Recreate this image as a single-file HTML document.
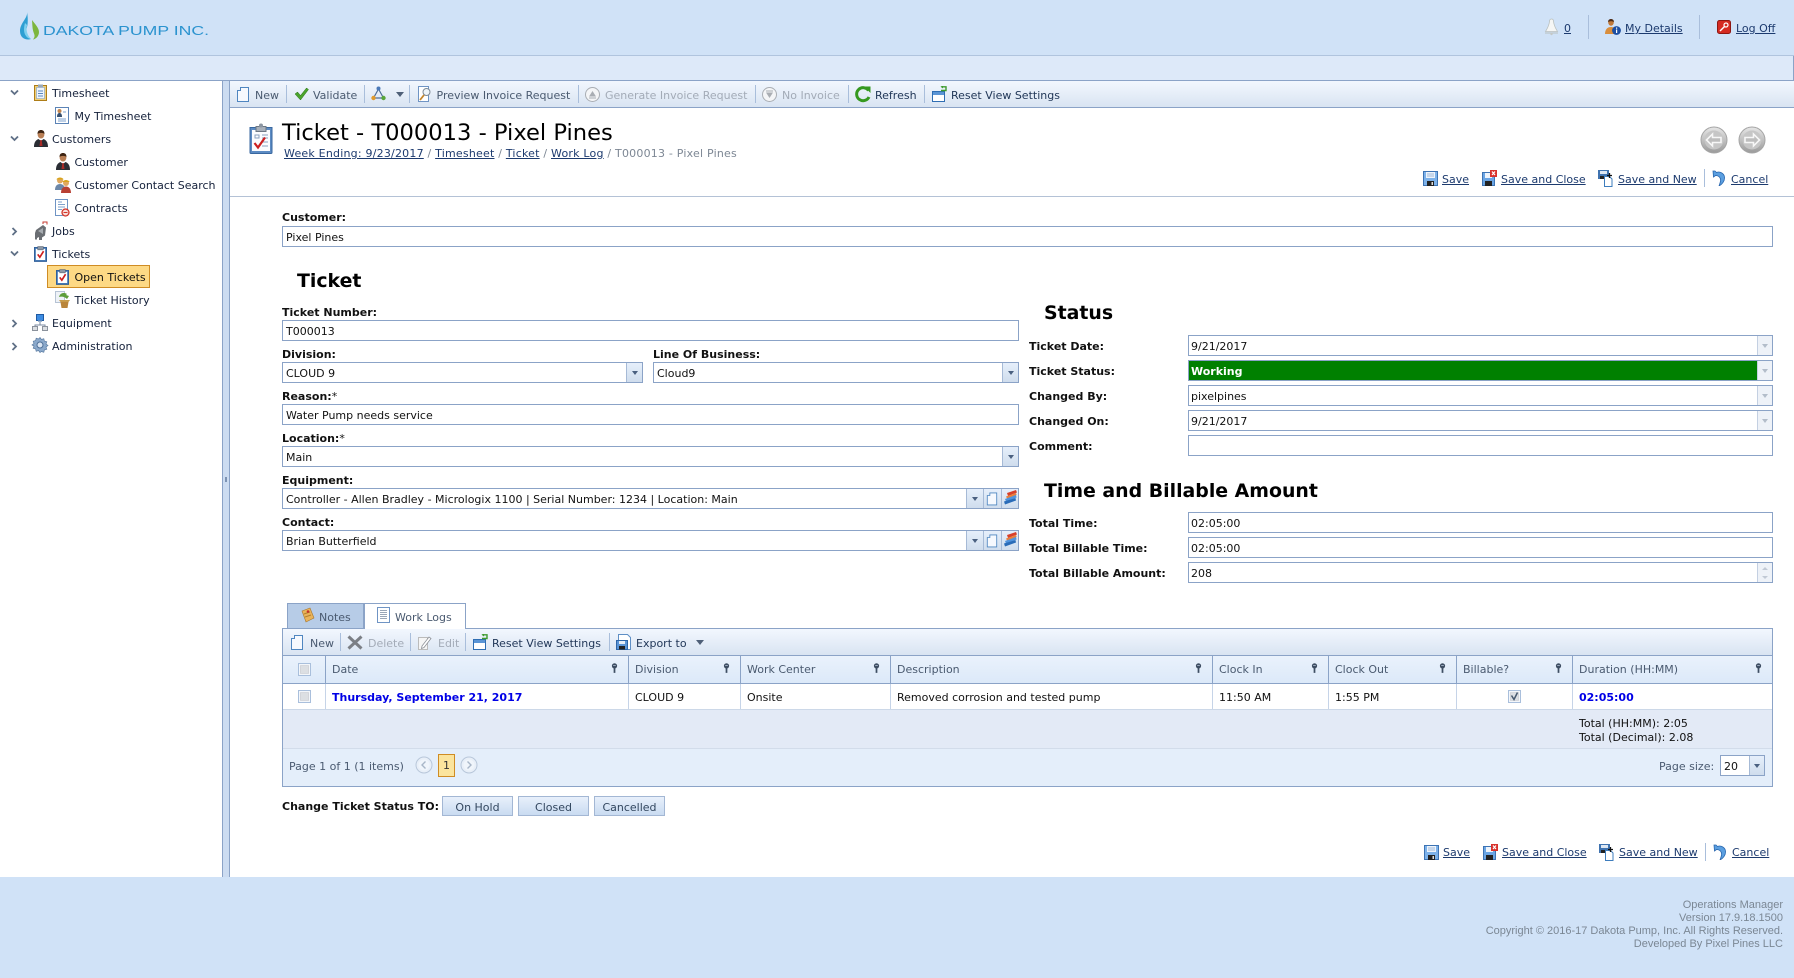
<!DOCTYPE html>
<html><head><meta charset="utf-8"><title>Ticket</title>
<style>
html,body{margin:0;padding:0;width:1794px;height:978px;overflow:hidden;background:#fff}
body{position:relative;font:11px/16px "DejaVu Sans",Verdana,sans-serif;color:#14203a}
.t{position:absolute;white-space:nowrap;height:16px;line-height:16px;margin-top:1px}
.h{margin-top:0;font-size:18.9px;font-weight:700;height:24px;line-height:24px;color:#000}
.b{position:absolute}
.l{position:absolute;white-space:nowrap;height:16px;line-height:16px;font-weight:700;color:#111;margin-top:1px}
.a{color:#1c3a6e;text-decoration:underline}
.d{color:#a3abb7}
.g{color:#4a5a70}
.i{position:absolute;box-sizing:border-box;border:1px solid #8ba3c7;background:#fff;overflow:hidden}
.i span{position:absolute;left:3px;top:3px;line-height:16px;white-space:nowrap;color:#111}
.i.r span{left:2px}
.dd{position:absolute;box-sizing:border-box;background:linear-gradient(#e6effb,#cfdded);border-left:1px solid #a6bad6;top:0;bottom:0}
.dd:after{content:"";position:absolute;left:50%;top:50%;margin:-2px 0 0 -3px;border:3px solid transparent;border-top:4px solid #4a6080;border-bottom:0}
.ro{background:#eef2f8;border-left:1px solid #c4d0e2}
.ro:after{border-top-color:#b3bdca}
.sep{position:absolute;width:1px;background:#a9bedb}
.btn{position:absolute;box-sizing:border-box;height:20px;top:796px;border:1px solid #a3b7d4;background:linear-gradient(#e8f0fb,#c9dbf1);text-align:center;line-height:21px;color:#33475f}
svg{position:absolute;overflow:visible}
.v{position:absolute;width:1px;background:#c6d4e8}
.vh{position:absolute;width:1px;background:#8ba3c7;top:656px;height:27px}
</style></head><body>
<svg width="0" height="0" style="position:absolute"><defs>
<linearGradient id="cg" x1="0" y1="0" x2="0" y2="1"><stop offset="0" stop-color="#e6e6e6"/><stop offset="1" stop-color="#9a9a9a"/></linearGradient>
<symbol id="new" viewBox="0 0 14 16"><path d="M1.500 4.500h3v-3h8v14h-11z" fill="#f6f9fe" stroke="#4f86c0"/></symbol>
<symbol id="save" viewBox="0 0 15 15"><path d="M.5 .5h14v14H.5z" fill="#7db2ea" stroke="#3d73b3"/><path d="M3 1h9v6H3z" fill="#eef4fb"/><path d="M4 3h7M4 5h7" stroke="#9db8d8"/><path d="M4 10h7v5H4z" fill="#222"/><path d="M8.500 11h1.500v3H8.500z" fill="#ddd"/></symbol>
<symbol id="saveclose" viewBox="0 0 15 16"><path d="M.5 2.500h12v13H.5z" fill="#6aa5e4" stroke="#3d73b3"/><path d="M3 3h7v5H3z" fill="#eef4fb"/><path d="M3 11h7v5H3z" fill="#222"/><path d="M8 0h7v7H8z" fill="#d8322c"/><path d="M10 1.500l3 3.500m0-3.500l-3 3.500" stroke="#fff" stroke-width="1.200"/></symbol>
<symbol id="savenew" viewBox="0 0 15 17"><path d="M0 0h11v9H0z" fill="#3f73b0"/><path d="M2 1h7v3H2z" fill="#dde7f3"/><path d="M2 6h7v3H2z" fill="#222"/><path d="M6.500 6.500h5l2.500 2.500v7.500H6.500z" fill="#fff" stroke="#3e7dbd"/><path d="M11.500 3v5M9 5.500h5" stroke="#111" stroke-width="1.300"/></symbol>
<symbol id="cancel" viewBox="0 0 14 16"><path d="M1 1l.5 6 2-1.500C7 5.500 9 8 8.500 11 8.200 13 7.500 14.500 7 16c3-1.500 6-5 5.500-9C12 3.500 8 1 4.500 2.500L3 1z" fill="#5b9fe0" stroke="#2a67ae" stroke-width=".8"/></symbol>
<symbol id="clip" viewBox="0 0 14 18"><path d="M.5 2.500h13v15H.5z" fill="#4a7db8" stroke="#2f5f99"/><path d="M2 4h10v12H2z" fill="#fff"/><path d="M4 1.500h6v3.500H4z" fill="#8d98a6" stroke="#5d6877" stroke-width=".6"/><path d="M4 10l2.300 3 4-6.500" fill="none" stroke="#cc1f1f" stroke-width="1.800"/></symbol>
<symbol id="person" viewBox="0 0 16 18"><ellipse cx="8" cy="4.500" rx="3.400" ry="4" fill="#b97f55"/><path d="M4.500 4C4.500 1 6 0 8 0s3.500 1 3.500 4C10 2.500 6 2.500 4.500 4z" fill="#3e2412"/><path d="M1 17c0-5 2-7 4.500-8L8 11l2.500-2c2.500 1 4.500 3 4.500 8z" fill="#2a2d34"/><path d="M7.300 10h1.400l.8 6H6.500z" fill="#a82a26"/></symbol>
<symbol id="filter" viewBox="0 0 8 12"><circle cx="4" cy="3" r="3" fill="#3e4e63"/><path d="M3 5h2v6H3z" fill="#3e4e63"/><path d="M2.500 2h3v1h-3z" fill="#a9b8cc"/></symbol>
<symbol id="reset" viewBox="0 0 16 16"><path d="M.5 5.500h12v10H.5z" fill="#fff" stroke="#2f6eb3"/><path d="M1 6h11v3H1z" fill="#5b95d6"/><path d="M9 4.500H14V.8H9.500" fill="none" stroke="#3e9b2e" stroke-width="1.400"/><path d="M11 -.8L8.500 .8 11 2.500z" fill="#3e9b2e"/></symbol>
<symbol id="cb" viewBox="0 0 13 13"><path d="M.5 .5h12v12H.5z" fill="#f3f6fa" stroke="#a9bfdc"/><path d="M2.500 2.500h8v8h-8z" fill="#dcdfe3" stroke="#c3c6cb" stroke-width=".6"/></symbol>
<symbol id="stack" viewBox="0 0 14 15"><path d="M4 3L13 0l1 2.500-9 3.500z" fill="#d8402a"/><path d="M3 6.500L13 3l.6 2L4 8.500z" fill="#e87f3c"/><path d="M2 9l11-4 .6 2.500L3 11.500z" fill="#4f93dd"/><path d="M1 11.500L12.500 8l.5 2.500L2 14.500z" fill="#2a6cb8"/></symbol>
</defs></svg>

<!-- header -->
<div class="b" style="left:0;top:0;width:1794px;height:55px;background:#d0e2f7;border-bottom:1px solid #b0c4de;box-sizing:content-box"></div>
<div class="b" style="left:0;top:56px;width:1793px;height:24px;background:#dde9f9;border-right:1px solid #8ba3c7"></div>
<div class="b" style="left:0;top:80px;width:1794px;height:1px;background:#8ba3c7"></div>

<!-- logo -->
<svg style="left:19px;top:12px" width="22" height="28" viewBox="0 0 22 28"><path d="M8 0C9 6 1 11 1 19c0 6 4 8.500 8 8.500 1.500 0 3-.5 3-.5-4-2-6-6-4-12 1-3 1-10 0-15z" fill="#2e9fd3"/><path d="M6 11c-1 4-2 9 1 13 1 1.500 3 2.800 5 3-3-3-5.500-8-4-14z" fill="#7fd0ee"/><path d="M13 8c3 4 7 8 7 12 0 4-3 7-6 7.500 3-3.500 1-5 0-9-.7-3-.7-7-1-10.500z" fill="#7cb63e"/></svg>
<svg style="left:43px;top:23px" width="168" height="14"><text x="0" y="12" textLength="166" lengthAdjust="spacingAndGlyphs" font-family="Liberation Sans" font-size="12.500" fill="#2b93cf">DAKOTA PUMP INC.</text></svg>

<!-- top right -->
<svg style="left:1544px;top:18px" width="15" height="17" viewBox="0 0 15 17"><path d="M7.500 1c1.500 0 2 1 2 2.500C10 8 12 11 13.500 13.500H1.500C3 11 5 8 5.500 3.500 5.500 2 6 1 7.500 1z" fill="#f5f6f5" stroke="#b9c0bf" stroke-width=".8"/><path d="M1 14.500h13v1H1z" fill="#b9c0bf"/><circle cx="7.500" cy="16" r="1.200" fill="#c4c8c6"/></svg>
<span class="t a" style="left:1564px;top:20px">0</span>
<div class="sep" style="left:1588px;top:15px;height:24px"></div>
<svg style="left:1605px;top:19px" width="16" height="16" viewBox="0 0 16 16"><ellipse cx="6" cy="3.500" rx="2.800" ry="3.200" fill="#c0793a"/><path d="M3 3C3 1 4.500 0 6 0s3 1 3 3c-1.500-1-4.500-1-6 0z" fill="#4e2c16"/><path d="M0 15c0-4 2-7 6-7s5 3 5 7z" fill="#d98e3c"/><circle cx="11.500" cy="11.500" r="4.400" fill="#1c4fa3"/><path d="M11 10.500h1.200v3.500H11zM11 8.500h1.200v1.200H11z" fill="#fff"/></svg>
<span class="t a" style="left:1625px;top:20px">My Details</span>
<div class="sep" style="left:1699px;top:15px;height:24px"></div>
<svg style="left:1717px;top:20px" width="14" height="14" viewBox="0 0 14 14"><rect x=".5" y=".5" width="13" height="13" rx="2" fill="#d52b22" stroke="#8e1712"/><circle cx="9" cy="5" r="2" fill="none" stroke="#fff" stroke-width="1.200"/><path d="M7.500 6.500L3 11" stroke="#fff" stroke-width="1.400"/></svg>
<span class="t a" style="left:1736px;top:20px">Log Off</span>

<!-- sidebar -->
<div class="b" style="left:222px;top:81px;width:1px;height:796px;background:#8ba3c7"></div>
<div class="b" style="left:223px;top:81px;width:6px;height:796px;background:#ccdcf1"></div>
<div class="b" style="left:229px;top:81px;width:1px;height:796px;background:#8ba3c7"></div>
<div class="b" style="left:225px;top:477px;width:2px;height:5px;background:#7d93b3"></div>

<svg style="left:0;top:81px" width="222" height="290" fill="none" stroke="#5f6f86" stroke-width="1.800">
<path d="M11 9.500l3.500 3.500 3.500-3.500M11 55.500l3.500 3.500 3.500-3.500M11 170.500l3.500 3.500 3.500-3.500"/>
<path d="M12.500 147l3.500 3.500-3.500 3.500M12.500 239l3.500 3.500-3.500 3.500M12.500 262l3.500 3.500-3.500 3.500"/></svg>

<svg style="left:34px;top:84px" width="13" height="17" viewBox="0 0 13 17"><path d="M.5 1.500h12v15H.5z" fill="#f2cf74" stroke="#ae7d18"/><path d="M2.500 3.500h8v11h-8z" fill="#eef4fc" stroke="#7ba0cc" stroke-width=".6"/><path d="M4 7h5M4 9.500h5M4 12h5" stroke="#5b89bf"/><path d="M4 .5h5v3H4z" fill="#9aa8b8"/></svg>
<span class="t" style="left:52px;top:85px">Timesheet</span>
<svg style="left:55px;top:107px" width="14" height="17" viewBox="0 0 14 17"><path d="M.5 .5h13v16H.5z" fill="#fff" stroke="#5b83b6"/><circle cx="4.500" cy="4" r="2" fill="#c1854f"/><path d="M2 10c0-3 1-4 2.500-4S7 7 7 10z" fill="#37506f"/><path d="M3 12h8M3 14h8M8 5h3" stroke="#7ea2cc"/></svg>
<span class="t" style="left:74.500px;top:108px">My Timesheet</span>

<svg style="left:33px;top:130px" width="16" height="18"><use href="#person" width="16" height="18"/></svg>
<span class="t" style="left:52px;top:131px">Customers</span>
<svg style="left:55px;top:153px" width="16" height="18"><use href="#person" width="16" height="18"/></svg>
<span class="t" style="left:74.500px;top:154px">Customer</span>
<svg style="left:54px;top:176px" width="18" height="17" viewBox="0 0 18 17"><circle cx="6" cy="4.500" r="3" fill="#e0a860"/><path d="M2.500 3.500C3 1 9 1 9.500 3.500z" fill="#d9a41d"/><path d="M1 14c0-4 2-6 5-6s5 2 5 6z" fill="#6d87a8"/><circle cx="12" cy="7" r="3" fill="#e0a860"/><path d="M8.500 6C9 3.500 15 3.500 15.500 6z" fill="#d9a41d"/><path d="M7 17c0-4 2-6.500 5-6.500s5 2.500 5 6.500z" fill="#b84033"/></svg>
<span class="t" style="left:74.500px;top:177px">Customer Contact Search</span>
<svg style="left:55px;top:199px" width="15" height="18" viewBox="0 0 15 18"><path d="M.5 .5h12v16H.5z" fill="#fff" stroke="#6f94c4"/><path d="M3 3h4M3 5.500h7M3 8h7M3 10.500h4" stroke="#7ea2cc"/><circle cx="10.500" cy="13.500" r="3.500" fill="#f7dcd8" stroke="#d3352a" stroke-width="1.300"/><path d="M8.500 13.500h4" stroke="#d3352a"/></svg>
<span class="t" style="left:74.500px;top:200px">Contracts</span>

<svg style="left:33px;top:222px" width="15" height="18" viewBox="0 0 15 18"><path d="M3 8l7-5 3 2.500-1 8-3 2v2.500H6V15l-2 1v1.500H2V11z" fill="#6a6e73"/><path d="M10 2V0h4v2.500" fill="none" stroke="#c63b30"/><path d="M5 9l5-3v6z" fill="#a6abb0"/></svg>
<span class="t" style="left:52px;top:223px">Jobs</span>
<svg style="left:34px;top:245px" width="13" height="17"><use href="#clip" width="13" height="17"/></svg>
<span class="t" style="left:52px;top:246px">Tickets</span>

<div class="b" style="left:47px;top:265px;width:103px;height:23px;box-sizing:border-box;background:#fdd985;border:1px solid #cf8c24"></div>
<svg style="left:56px;top:268px" width="13" height="17"><use href="#clip" width="13" height="17"/></svg>
<span class="t" style="left:74.500px;top:269px;color:#111">Open Tickets</span>
<svg style="left:55px;top:291px" width="16" height="18" viewBox="0 0 16 18"><path d="M.5 .5h9v11h-9z" fill="#eef2f7" stroke="#b6c3d4"/><path d="M4 6c1-4 5-5 8-3l-1 1 3 1-2 3c-2-2-5-3-8-2z" fill="#5e9e3a"/><path d="M4 9h11l-1.500 2H5.500z" fill="#c69b4b"/><path d="M5.500 11h8l-1 6h-6z" fill="#b9853b"/></svg>
<span class="t" style="left:74.500px;top:292px">Ticket History</span>

<svg style="left:32px;top:314px" width="16" height="17" viewBox="0 0 16 17"><path d="M4.500 .5h7v6h-7z" fill="#3d8ce2" stroke="#1f5aa3"/><path d="M6 6.500h4v1.500H6z" fill="#9bb2cc"/><path d="M8 8v3M3 13v-2h10v2" fill="none" stroke="#7a8aa0"/><path d="M.5 12.500h5v4h-5zM10.500 12.500h5v4h-5z" fill="#dcdfe3" stroke="#8b929c"/></svg>
<span class="t" style="left:52px;top:315px">Equipment</span>
<svg style="left:32px;top:337px" width="16" height="16" viewBox="0 0 16 16"><path d="M8 .5l1.500 2 2.300-.8.6 2.400 2.400.6-.8 2.300 2 1.500-2 1.500.8 2.300-2.400.6-.6 2.400-2.300-.8L8 15.500l-1.500-2-2.300.8-.6-2.400-2.400-.6.8-2.300L0 8l2-1.500-.8-2.300 2.400-.6.6-2.400 2.300.8z" fill="#8ba9cb" stroke="#5a7ba1" stroke-width=".7"/><circle cx="8" cy="8" r="3" fill="#dbe6f3" stroke="#4f7098"/></svg>
<span class="t" style="left:52px;top:338px">Administration</span>

<!-- main toolbar -->
<div class="b" style="left:230px;top:81px;width:1564px;height:26px;background:linear-gradient(#f2f7fe,#d9e4f2);border-bottom:1px solid #8ba3c7"></div>
<svg style="left:236px;top:86px" width="14" height="16"><use href="#new" width="14" height="16"/></svg>
<span class="t g" style="left:255px;top:87px">New</span>
<div class="sep" style="left:286px;top:85px;height:18px"></div>
<svg style="left:294px;top:87px" width="15" height="14" viewBox="0 0 15 14"><path d="M1 7l2.500-2 3 3.500L12.500 1 14.500 2.500 6.500 13z" fill="#4aa32c" stroke="#2c7516" stroke-width=".5"/></svg>
<span class="t g" style="left:313px;top:87px">Validate</span>
<div class="sep" style="left:364px;top:85px;height:18px"></div>
<svg style="left:371px;top:86px" width="15" height="15" viewBox="0 0 15 15"><path d="M7.500 3L2.500 12h10z" fill="none" stroke="#4f6d96" stroke-width="1.200"/><circle cx="7.500" cy="2.500" r="2" fill="#4b79b8"/><circle cx="2.500" cy="12" r="2.200" fill="#e19a2c"/><circle cx="12.500" cy="12" r="2.200" fill="#59a63a"/></svg>
<div class="b" style="left:396px;top:92px;border:4px solid transparent;border-top:5px solid #4f6078;border-bottom:0"></div>
<div class="sep" style="left:409px;top:85px;height:18px"></div>
<svg style="left:418px;top:86px" width="14" height="16" viewBox="0 0 14 16"><path d="M.5 .5h10v15h-10z" fill="#fff" stroke="#6f94c4"/><circle cx="8.500" cy="6" r="3.500" fill="#eef5fb" stroke="#7f8a96"/><path d="M6 9l-4 5" stroke="#c5862b" stroke-width="1.800"/></svg>
<span class="t g" style="left:436.500px;top:87px">Preview Invoice Request</span>
<div class="sep" style="left:578px;top:85px;height:18px"></div>
<svg style="left:585px;top:87px" width="15" height="15" viewBox="0 0 15 15"><circle cx="7.500" cy="7.500" r="7" fill="#f4f5f7" stroke="#a9adb3"/><path d="M7.500 4l3.500 5.500H4z" fill="#a9adb3"/><path d="M4 11h7" stroke="#a9adb3"/></svg>
<span class="t d" style="left:605px;top:87px">Generate Invoice Request</span>
<div class="sep" style="left:755px;top:85px;height:18px"></div>
<svg style="left:762px;top:87px" width="15" height="15" viewBox="0 0 15 15"><circle cx="7.500" cy="7.500" r="7" fill="#f4f5f7" stroke="#a9adb3"/><path d="M7.500 11L4 5.500h7z" fill="#a9adb3"/><path d="M4 4h7" stroke="#a9adb3"/></svg>
<span class="t d" style="left:782px;top:87px">No Invoice</span>
<div class="sep" style="left:848px;top:85px;height:18px"></div>
<svg style="left:855px;top:86px" width="16" height="16" viewBox="0 0 16 16"><path d="M13.500 4.500A6.500 6.500 0 1 0 14 11" fill="none" stroke="#35991f" stroke-width="3"/><path d="M9 .5h6.500V7z" fill="#35991f"/></svg>
<span class="t" style="left:875px;top:87px;color:#1f3556">Refresh</span>
<div class="sep" style="left:924px;top:85px;height:18px"></div>
<svg style="left:932px;top:86px" width="16" height="16"><use href="#reset" width="16" height="16"/></svg>
<span class="t" style="left:951px;top:87px;color:#1f3556">Reset View Settings</span>

<!-- title -->
<svg style="left:249px;top:123px" width="24" height="31" viewBox="0 0 24 31"><path d="M1 4.500h22v25a1 1 0 0 1-1 1H2a1 1 0 0 1-1-1z" fill="#5c8bc3" stroke="#38679f"/><path d="M3 7h18v21H3z" fill="#fbfcfe"/><path d="M7 3.500h10v5H7z" fill="#a8b0ba" stroke="#6d7783"/><circle cx="12" cy="2.500" r="2" fill="#8b95a1"/><path d="M6 12h4v3H6zM13 12h6M13 15h6M13 19h6M13 23h6" fill="none" stroke="#8aa0bd"/><path d="M5.500 20l3.500 4.500 7-10" fill="none" stroke="#cc1f1f" stroke-width="2.200"/></svg>
<span class="t" style="left:282px;top:119px;font-size:22.600px;height:26px;line-height:26px;color:#000">Ticket - T000013 - Pixel Pines</span>
<span class="t" style="left:284px;top:145px;color:#7d8794;letter-spacing:.21px"><span class="a">Week Ending: 9/23/2017</span> / <span class="a">Timesheet</span> / <span class="a">Ticket</span> / <span class="a">Work Log</span> / T000013 - Pixel Pines</span>

<svg style="left:1700px;top:125.500px" width="28" height="28" viewBox="0 0 28 28"><circle cx="14" cy="14" r="13" fill="url(#cg)" stroke="#a5a5a5"/><circle cx="14" cy="14" r="9.500" fill="#c6c6c6"/><path d="M6.500 14l6-6v3.500h8.500v5h-8.500V20z" fill="#bdbdbd" stroke="#f7f7f7" stroke-width="1.600"/></svg>
<svg style="left:1738px;top:125.500px" width="28" height="28" viewBox="0 0 28 28"><circle cx="14" cy="14" r="13" fill="url(#cg)" stroke="#a5a5a5"/><circle cx="14" cy="14" r="9.500" fill="#c6c6c6"/><path d="M21.500 14l-6-6v3.500H7v5h8.500V20z" fill="#bdbdbd" stroke="#f7f7f7" stroke-width="1.600"/></svg>

<svg style="left:1423px;top:171px" width="15" height="15"><use href="#save" width="15" height="15"/></svg>
<span class="t a" style="left:1442px;top:171px">Save</span>
<svg style="left:1482px;top:170px" width="15" height="16"><use href="#saveclose" width="15" height="16"/></svg>
<span class="t a" style="left:1501px;top:171px">Save and Close</span>
<svg style="left:1598px;top:170px" width="15" height="17"><use href="#savenew" width="15" height="17"/></svg>
<span class="t a" style="left:1618px;top:171px">Save and New</span>
<div class="sep" style="left:1704px;top:169px;height:18px"></div>
<svg style="left:1712px;top:170px" width="14" height="16"><use href="#cancel" width="14" height="16"/></svg>
<span class="t a" style="left:1731px;top:171px">Cancel</span>
<div class="b" style="left:230px;top:196px;width:1564px;height:1px;background:#b4c2d6"></div>

<!-- customer -->
<span class="l" style="left:282px;top:209px">Customer:</span>
<div class="i" style="left:282px;top:226px;width:1491px;height:21px"><span>Pixel Pines</span></div>
<span class="t h" style="left:297px;top:269px">Ticket</span>

<!-- left form -->
<span class="l" style="left:282px;top:304px">Ticket Number:</span>
<div class="i" style="left:282px;top:320px;width:737px;height:21px"><span>T000013</span></div>
<span class="l" style="left:282px;top:346px">Division:</span>
<div class="i" style="left:282px;top:362px;width:361px;height:21px"><span>CLOUD 9</span><div class="dd" style="right:0;width:16px"></div></div>
<span class="l" style="left:653px;top:346px">Line Of Business:</span>
<div class="i" style="left:653px;top:362px;width:366px;height:21px"><span>Cloud9</span><div class="dd" style="right:0;width:16px"></div></div>
<span class="l" style="left:282px;top:388px">Reason:<span style="font-weight:400">*</span></span>
<div class="i" style="left:282px;top:404px;width:737px;height:21px"><span>Water Pump needs service</span></div>
<span class="l" style="left:282px;top:430px">Location:<span style="font-weight:400">*</span></span>
<div class="i" style="left:282px;top:446px;width:737px;height:21px"><span>Main</span><div class="dd" style="right:0;width:16px"></div></div>
<span class="l" style="left:282px;top:472px">Equipment:</span>
<div class="i" style="left:282px;top:488px;width:737px;height:21px"><span>Controller - Allen Bradley - Micrologix 1100 | Serial Number: 1234 | Location: Main</span><div class="dd" style="left:683px;width:17px"></div></div>
<span class="l" style="left:282px;top:514px">Contact:</span>
<div class="i" style="left:282px;top:530px;width:737px;height:21px"><span>Brian Butterfield</span><div class="dd" style="left:683px;width:17px"></div></div>
<div class="b" style="left:983px;top:489px;width:18px;height:19px;background:linear-gradient(#e6effb,#cfdded);border-left:1px solid #a6bad6;box-sizing:border-box"></div>
<div class="b" style="left:1001px;top:489px;width:17px;height:19px;background:linear-gradient(#e6effb,#cfdded);border-left:1px solid #a6bad6;box-sizing:border-box"></div>
<div class="b" style="left:983px;top:531px;width:18px;height:19px;background:linear-gradient(#e6effb,#cfdded);border-left:1px solid #a6bad6;box-sizing:border-box"></div>
<div class="b" style="left:1001px;top:531px;width:17px;height:19px;background:linear-gradient(#e6effb,#cfdded);border-left:1px solid #a6bad6;box-sizing:border-box"></div>
<svg style="left:986px;top:491px" width="12" height="15"><use href="#new" width="12" height="15"/></svg>
<svg style="left:1003px;top:490px" width="14" height="15"><use href="#stack" width="14" height="15"/></svg>
<svg style="left:986px;top:533px" width="12" height="15"><use href="#new" width="12" height="15"/></svg>
<svg style="left:1003px;top:532px" width="14" height="15"><use href="#stack" width="14" height="15"/></svg>

<!-- right form -->
<span class="t h" style="left:1044px;top:301px">Status</span>
<span class="l" style="left:1029px;top:338px">Ticket Date:</span>
<div class="i r" style="left:1188px;top:335px;width:585px;height:21px"><span>9/21/2017</span><div class="dd ro" style="right:0;width:15px"></div></div>
<span class="l" style="left:1029px;top:363px">Ticket Status:</span>
<div class="i r" style="left:1188px;top:360px;width:585px;height:21px"><div class="b" style="left:0;top:0;bottom:0;right:15px;background:#008000"></div><span style="color:#fff;font-weight:700">Working</span><div class="dd ro" style="right:0;width:15px"></div></div>
<span class="l" style="left:1029px;top:388px">Changed By:</span>
<div class="i r" style="left:1188px;top:385px;width:585px;height:21px"><span>pixelpines</span><div class="dd ro" style="right:0;width:15px"></div></div>
<span class="l" style="left:1029px;top:413px">Changed On:</span>
<div class="i r" style="left:1188px;top:410px;width:585px;height:21px"><span>9/21/2017</span><div class="dd ro" style="right:0;width:15px"></div></div>
<span class="l" style="left:1029px;top:438px">Comment:</span>
<div class="i r" style="left:1188px;top:435px;width:585px;height:21px"></div>

<span class="t h" style="left:1044px;top:478.500px">Time and Billable Amount</span>
<span class="l" style="left:1029px;top:515px">Total Time:</span>
<div class="i r" style="left:1188px;top:512px;width:585px;height:21px"><span>02:05:00</span></div>
<span class="l" style="left:1029px;top:540px">Total Billable Time:</span>
<div class="i r" style="left:1188px;top:537px;width:585px;height:21px"><span>02:05:00</span></div>
<span class="l" style="left:1029px;top:565px">Total Billable Amount:</span>
<div class="i r" style="left:1188px;top:562px;width:585px;height:21px"><span>208</span><div class="b" style="right:0;top:0;bottom:0;width:15px;background:#eef2f8;border-left:1px solid #c4d0e2;box-sizing:border-box"></div></div>
<div class="b" style="left:1762px;top:567px;border:3px solid transparent;border-bottom:3px solid #c1c9d5;border-top:0"></div>
<div class="b" style="left:1762px;top:576px;border:3px solid transparent;border-top:3px solid #c1c9d5;border-bottom:0"></div>

<!-- tabs -->
<div class="b" style="left:287px;top:603px;width:77px;height:25px;box-sizing:border-box;background:#b7cce7;border:1px solid #8ba3c7;border-bottom:0"></div>
<svg style="left:300px;top:608px" width="15" height="15" viewBox="0 0 15 15"><path d="M2 3l8-3 4 10-8 4z" fill="#e9b35a" stroke="#a8752a" stroke-width=".6"/><path d="M4 6l6-2M5 9l6-2" stroke="#b3802f"/><circle cx="8" cy="3.500" r="1.300" fill="#c62f2a"/></svg>
<span class="t g" style="left:319px;top:609px">Notes</span>
<div class="b" style="left:364px;top:603px;width:102px;height:26px;box-sizing:border-box;background:#fff;border:1px solid #8ba3c7;border-bottom:0;z-index:2"></div>
<svg style="left:377px;top:607px;z-index:3" width="13" height="16" viewBox="0 0 13 16"><path d="M.5 .5h12v15H.5z" fill="#fff" stroke="#6f94c4"/><path d="M3 3.500h7M3 5.500h7M3 7.500h7M3 9.500h7M3 11.500h7" stroke="#9aa6b6"/></svg>
<span class="t g" style="left:395px;top:609px;z-index:3">Work Logs</span>

<!-- grid -->
<div class="b" style="left:282px;top:628px;width:1491px;height:159px;box-sizing:border-box;border:1px solid #8ba3c7;background:#e4eefa"></div>
<div class="b" style="left:283px;top:629px;width:1489px;height:26px;background:linear-gradient(#f2f7fe,#d9e4f2);border-bottom:1px solid #8ba3c7"></div>
<svg style="left:290px;top:634px" width="14" height="16"><use href="#new" width="14" height="16"/></svg>
<span class="t g" style="left:310px;top:635px">New</span>
<div class="sep" style="left:340px;top:633px;height:18px"></div>
<svg style="left:347px;top:635px" width="16" height="15" viewBox="0 0 16 15"><path d="M1.500 1.500l13 12m0-12l-13 12" stroke="#7b7f85" stroke-width="3"/></svg>
<span class="t d" style="left:368px;top:635px">Delete</span>
<div class="sep" style="left:410px;top:633px;height:18px"></div>
<svg style="left:418px;top:635px" width="14" height="15" viewBox="0 0 14 15"><path d="M.5 2.500h9v12h-9z" fill="#f5f5f5" stroke="#bbb"/><path d="M4 11l7-9 2 1.500-7 9-2.500 1z" fill="#fff" stroke="#8d9198" stroke-width=".8"/></svg>
<span class="t d" style="left:438px;top:635px">Edit</span>
<div class="sep" style="left:465px;top:633px;height:18px"></div>
<svg style="left:473px;top:634px" width="16" height="16"><use href="#reset" width="16" height="16"/></svg>
<span class="t" style="left:492px;top:635px;color:#1f3556">Reset View Settings</span>
<div class="sep" style="left:609px;top:633px;height:18px"></div>
<svg style="left:616px;top:634px" width="16" height="16" viewBox="0 0 16 16"><path d="M2.500 .5h9l3 3v12h-12z" fill="#fff" stroke="#5f8fc5"/><path d="M.5 6.500h11v9H.5z" fill="#5b95d6" stroke="#2e66a8"/><path d="M3 7h6v3H3z" fill="#e6eef8"/><path d="M3 12h6v3.500H3z" fill="#222"/></svg>
<span class="t" style="left:636px;top:635px;color:#1f3556">Export to</span>
<div class="b" style="left:696px;top:640px;border:4px solid transparent;border-top:5px solid #4f6078;border-bottom:0"></div>

<div class="b" style="left:283px;top:656px;width:1489px;height:27px;background:linear-gradient(#eaf2fc,#dce9f9);border-bottom:1px solid #8ba3c7"></div>
<div class="b" style="left:283px;top:684px;width:1489px;height:25px;background:#fff;border-bottom:1px solid #ccd8e8"></div>
<div class="b" style="left:283px;top:710px;width:1489px;height:38px;background:#e3eaf6;border-bottom:1px solid #d2dcea"></div>

<div class="vh" style="left:325px"></div><div class="vh" style="left:628px"></div><div class="vh" style="left:740px"></div><div class="vh" style="left:890px"></div><div class="vh" style="left:1212px"></div><div class="vh" style="left:1328px"></div><div class="vh" style="left:1456px"></div><div class="vh" style="left:1572px"></div>
<div class="v" style="left:325px;top:684px;height:25px"></div><div class="v" style="left:628px;top:684px;height:25px"></div><div class="v" style="left:740px;top:684px;height:25px"></div><div class="v" style="left:890px;top:684px;height:25px"></div><div class="v" style="left:1212px;top:684px;height:25px"></div><div class="v" style="left:1328px;top:684px;height:25px"></div><div class="v" style="left:1456px;top:684px;height:25px"></div><div class="v" style="left:1572px;top:684px;height:25px"></div>

<svg style="left:298px;top:663px" width="13" height="13"><use href="#cb" width="13" height="13"/></svg>
<svg style="left:298px;top:690px" width="13" height="13"><use href="#cb" width="13" height="13"/></svg>
<span class="t g" style="left:332px;top:661px">Date</span>
<span class="t g" style="left:635px;top:661px">Division</span>
<span class="t g" style="left:747px;top:661px">Work Center</span>
<span class="t g" style="left:897px;top:661px">Description</span>
<span class="t g" style="left:1219px;top:661px">Clock In</span>
<span class="t g" style="left:1335px;top:661px">Clock Out</span>
<span class="t g" style="left:1463px;top:661px">Billable?</span>
<span class="t g" style="left:1579px;top:661px">Duration (HH:MM)</span>
<svg style="left:611px;top:663px" width="7" height="11"><use href="#filter" width="7" height="11"/></svg>
<svg style="left:723px;top:663px" width="7" height="11"><use href="#filter" width="7" height="11"/></svg>
<svg style="left:873px;top:663px" width="7" height="11"><use href="#filter" width="7" height="11"/></svg>
<svg style="left:1195px;top:663px" width="7" height="11"><use href="#filter" width="7" height="11"/></svg>
<svg style="left:1311px;top:663px" width="7" height="11"><use href="#filter" width="7" height="11"/></svg>
<svg style="left:1439px;top:663px" width="7" height="11"><use href="#filter" width="7" height="11"/></svg>
<svg style="left:1555px;top:663px" width="7" height="11"><use href="#filter" width="7" height="11"/></svg>
<svg style="left:1755px;top:663px" width="7" height="11"><use href="#filter" width="7" height="11"/></svg>

<span class="t" style="left:332px;top:689px;color:#0000e6;font-weight:700">Thursday, September 21, 2017</span>
<span class="t" style="left:635px;top:689px;color:#111">CLOUD 9</span>
<span class="t" style="left:747px;top:689px;color:#111">Onsite</span>
<span class="t" style="left:897px;top:689px;color:#111">Removed corrosion and tested pump</span>
<span class="t" style="left:1219px;top:689px;color:#111">11:50 AM</span>
<span class="t" style="left:1335px;top:689px;color:#111">1:55 PM</span>
<svg style="left:1508px;top:690px" width="13" height="13" viewBox="0 0 13 13"><use href="#cb" width="13" height="13"/><path d="M3.500 5.500l2.500 4 3.500-7" fill="none" stroke="#46586f" stroke-width="1.500"/></svg>
<span class="t" style="left:1579px;top:689px;color:#0000e6;font-weight:700">02:05:00</span>
<span class="t" style="left:1579px;top:715px;color:#111">Total (HH:MM): 2:05</span>
<span class="t" style="left:1579px;top:728.500px;color:#111">Total (Decimal): 2.08</span>

<span class="t g" style="left:289px;top:758px">Page 1 of 1 (1 items)</span>
<svg style="left:415px;top:756px" width="18" height="18" viewBox="0 0 18 18"><circle cx="9" cy="9" r="8" fill="#e8eff8" stroke="#b8c7da"/><circle cx="9" cy="9" r="5.500" fill="#f0f5fb"/><path d="M10.500 5.500L7 9l3.500 3.500" fill="none" stroke="#a8b6c8" stroke-width="1.400"/></svg>
<div class="b" style="left:438px;top:754px;width:17px;height:23px;box-sizing:border-box;background:#fbe49d;border:1px solid #cf8c24;text-align:center;line-height:21px;color:#333">1</div>
<svg style="left:460px;top:756px" width="18" height="18" viewBox="0 0 18 18"><circle cx="9" cy="9" r="8" fill="#e8eff8" stroke="#b8c7da"/><circle cx="9" cy="9" r="5.500" fill="#f0f5fb"/><path d="M7.500 5.500L11 9l-3.500 3.500" fill="none" stroke="#a8b6c8" stroke-width="1.400"/></svg>
<span class="t g" style="left:1659px;top:758px">Page size:</span>
<div class="i" style="left:1720px;top:755px;width:45px;height:21px"><span>20</span><div class="dd" style="right:0;width:15px"></div></div>

<!-- status buttons -->
<span class="l" style="left:282px;top:798px">Change Ticket Status TO:</span>
<div class="btn" style="left:442px;width:71px">On Hold</div>
<div class="btn" style="left:518px;width:71px">Closed</div>
<div class="btn" style="left:594px;width:71px">Cancelled</div>

<!-- bottom actions -->
<svg style="left:1424px;top:845px" width="15" height="15"><use href="#save" width="15" height="15"/></svg>
<span class="t a" style="left:1443px;top:844px">Save</span>
<svg style="left:1483px;top:844px" width="15" height="16"><use href="#saveclose" width="15" height="16"/></svg>
<span class="t a" style="left:1502px;top:844px">Save and Close</span>
<svg style="left:1599px;top:844px" width="15" height="17"><use href="#savenew" width="15" height="17"/></svg>
<span class="t a" style="left:1619px;top:844px">Save and New</span>
<div class="sep" style="left:1705px;top:843px;height:18px"></div>
<svg style="left:1713px;top:844px" width="14" height="16"><use href="#cancel" width="14" height="16"/></svg>
<span class="t a" style="left:1732px;top:844px">Cancel</span>

<!-- footer -->
<div class="b" style="left:0;top:877px;width:1794px;height:101px;background:#d0e2f7"></div>
<div class="b" style="right:11px;top:898.500px;text-align:right;font:11px/13.300px 'Liberation Sans',Arial,sans-serif;color:#7b8794;white-space:nowrap">Operations Manager<br>Version 17.9.18.1500<br>Copyright © 2016-17 Dakota Pump, Inc. All Rights Reserved.<br>Developed By Pixel Pines LLC</div>
</body></html>
